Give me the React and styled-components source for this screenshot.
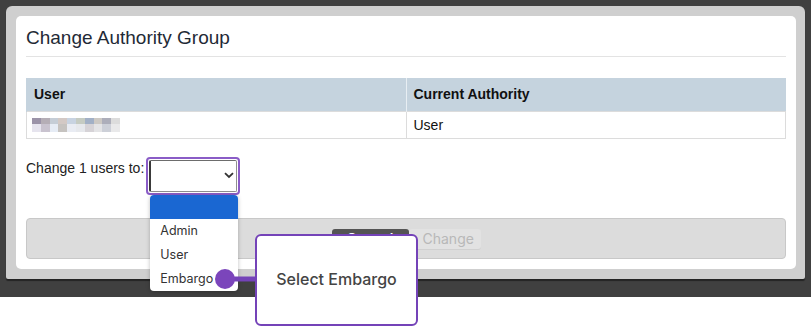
import React from "react";
import styled, { createGlobalStyle } from "styled-components";

const GlobalStyle = createGlobalStyle`
  html, body {
    margin: 0;
    padding: 0;
    background: #ffffff;
  }
  body {
    font-family: "Liberation Sans", Arial, sans-serif;
    color: #222;
  }
`;

const Page = styled.div`
  position: relative;
  width: 811px;
  height: 329px;
  background: #fff;
  overflow: hidden;
`;

const Backdrop = styled.div`
  height: 297px;
  background: #404040;
  padding: 6px 6px 0 6px;
  box-sizing: border-box;
`;

const Frame = styled.div`
  width: 799px;
  height: 273px;
  box-sizing: border-box;
  background: #cfcfcf;
  border-radius: 6px 6px 2px 2px;
  padding: 10px 9px 10px 10px;
  box-shadow: 0 2px 1px rgba(0, 0, 0, 0.45);
`;

const Panel = styled.div`
  height: 100%;
  box-sizing: border-box;
  background: #fff;
  border-radius: 5px;
  padding: 10px;
  display: flex;
  flex-direction: column;
`;

const Title = styled.h2`
  margin: 0;
  font-size: 19px;
  line-height: 24px;
  font-weight: 400;
  color: #1f2a36;
  padding-bottom: 6px;
  border-bottom: 1px solid #e3e3e3;
`;

const Table = styled.table`
  margin-top: 21px;
  width: 100%;
  border-collapse: collapse;
  font-size: 14px;
  color: #111;
`;

const HeadCell = styled.th`
  background: #c5d3de;
  text-align: left;
  font-weight: 700;
  height: 33px;
  padding: 0 7px;
  box-sizing: border-box;
  width: 50%;
  border-left: 1px solid ${(p) => (p.$first ? "#c5d3de" : "#e8eef3")};
`;

const Cell = styled.td`
  height: 27px;
  padding: 0 7px;
  box-sizing: border-box;
  border: 1px solid #dcdcdc;
`;

const Blur = styled.div`
  display: grid;
  grid-template-columns: repeat(10, 8.8px);
  grid-template-rows: 6px 8px;
  margin-left: -2px;
  margin-top: 1px;
`;

const Pixel = styled.span`
  background: ${(p) => p.$c};
`;

const ChangeRow = styled.div`
  display: flex;
  align-items: flex-start;
  margin-top: 18px;
  font-size: 14px;
  color: #222;
`;

const Label = styled.span`
  margin-top: 3px;
  margin-right: 2px;
`;

const SelectWrap = styled.div`
  position: relative;
  width: 94px;
  height: 38px;
  box-sizing: border-box;
  border: 2px solid #8a5cc7;
  border-radius: 4px;
  padding: 1px;
`;

const SelectBox = styled.div`
  height: 100%;
  box-sizing: border-box;
  background: #fff;
  border: 1px solid #8f8f8f;
  border-left: 2px solid #3a3a3a;
  border-top-color: #6d6d6d;
  border-radius: 2px;
  display: flex;
  align-items: center;
  justify-content: flex-end;
  padding-right: 2px;
`;

const Options = styled.ul`
  position: absolute;
  top: 36px;
  left: 2px;
  width: 88px;
  margin: 0;
  padding: 0;
  list-style: none;
  background: #fff;
  border-radius: 4px;
  box-shadow: 0 1px 4px rgba(0, 0, 0, 0.25);
  overflow: hidden;
  z-index: 2;
  font-family: Inter, "Liberation Sans", sans-serif;
  font-size: 12.5px;
  color: #333;
`;

const Option = styled.li`
  height: 24px;
  line-height: 24px;
  padding-left: 10px;
  background: ${(p) => (p.$active ? "#1a67d2" : "transparent")};
`;

const Footer = styled.div`
  margin-top: 23px;
  height: 42px;
  box-sizing: border-box;
  background: #dcdcdc;
  border: 1px solid #c8c8c8;
  border-radius: 4px;
  display: flex;
  justify-content: center;
  align-items: flex-start;
  padding-top: 10px;
`;

const Button = styled.button`
  font-family: Inter, "Liberation Sans", sans-serif;
  font-size: 14px;
  height: 20px;
  padding: 0 14px;
  border: none;
  border-radius: 3px;
  background: ${(p) => (p.$dark ? "#545454" : "#e2e2e2")};
  color: ${(p) => (p.$dark ? "#fff" : "#b8b8b8")};
  width: ${(p) => (p.$dark ? "77px" : "72px")};
  box-shadow: ${(p) => (p.$dark ? "none" : "0 1px 0 #d0d0d0")};
  font-weight: ${(p) => (p.$dark ? 600 : 400)};
`;

const Callout = styled.div`
  position: absolute;
  left: 255px;
  top: 234px;
  width: 163px;
  height: 92px;
  box-sizing: border-box;
  background: #fff;
  border: 2px solid #7443b8;
  border-radius: 6px;
  display: flex;
  align-items: center;
  justify-content: center;
  font-family: Inter, "Liberation Sans", sans-serif;
  font-size: 16px;
  font-weight: 500;
  color: #444;
  padding-bottom: 2px;
  z-index: 3;
`;

const Connector = styled.svg`
  position: absolute;
  left: 214px;
  top: 268px;
  z-index: 4;
`;

const top = ["#9b93a8", "#b5aeb6", "#c5cdd6", "#d3c9c5", "#c8d3e1", "#c5cbc2", "#a2b0c6", "#cdc9c4", "#adaeba", "#dcdcdc"];
const bottom = ["#e6e4ee", "#c9c3cf", "#e6ecf5", "#c6c3c0", "#e9ecf3", "#e6e8ec", "#d6d3d7", "#e4e4e6", "#cdd0d8", "#e9e9ea"];

export default function App() {
  return (
    <Page>
      <GlobalStyle />
      <Backdrop>
        <Frame>
          <Panel>
            <Title>Change Authority Group</Title>
            <Table>
              <thead>
                <tr>
                  <HeadCell $first>User</HeadCell>
                  <HeadCell>Current Authority</HeadCell>
                </tr>
              </thead>
              <tbody>
                <tr>
                  <Cell>
                    <Blur>
                      {top.concat(bottom).map((c, i) => (
                        <Pixel key={i} $c={c} />
                      ))}
                    </Blur>
                  </Cell>
                  <Cell>User</Cell>
                </tr>
              </tbody>
            </Table>
            <ChangeRow>
              <Label>Change 1 users to:</Label>
              <SelectWrap>
                <SelectBox>
                  <svg width="10" height="7" viewBox="0 0 10 7">
                    <path d="M1 1.2 L5 5 L9 1.2" fill="none" stroke="#333" strokeWidth="1.8" />
                  </svg>
                </SelectBox>
                <Options>
                  <Option $active>&nbsp;</Option>
                  <Option>Admin</Option>
                  <Option>User</Option>
                  <Option>Embargo</Option>
                </Options>
              </SelectWrap>
            </ChangeRow>
            <Footer>
              <Button $dark>Cancel</Button>
              <Button>Change</Button>
            </Footer>
          </Panel>
        </Frame>
      </Backdrop>
      <Connector width="42" height="22" viewBox="0 0 42 22">
        <line x1="20" y1="11" x2="42" y2="11" stroke="#7443b8" strokeWidth="5" />
        <circle cx="11" cy="11" r="10" fill="#7b45bb" />
      </Connector>
      <Callout>Select Embargo</Callout>
    </Page>
  );
}
